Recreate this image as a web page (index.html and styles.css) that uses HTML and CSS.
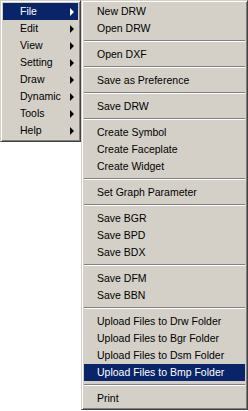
FILE: index.html
```
<!DOCTYPE html>
<html lang="en">
<head>
    <meta charset="UTF-8">
    <title>Menu</title>
    <link rel="stylesheet" href="styles.css">
</head>
<body>
    <div class="menus">
        <ul class="menu main-menu">
            <li class="item active has-sub">File</li>
            <li class="item has-sub">Edit</li>
            <li class="item has-sub">View</li>
            <li class="item has-sub">Setting</li>
            <li class="item has-sub">Draw</li>
            <li class="item has-sub">Dynamic</li>
            <li class="item has-sub">Tools</li>
            <li class="item has-sub">Help</li>
        </ul>
        <ul class="menu sub-menu">
            <li class="item">New DRW</li>
            <li class="item">Open DRW</li>
            <li class="sep"></li>
            <li class="item">Open DXF</li>
            <li class="sep"></li>
            <li class="item">Save as Preference</li>
            <li class="sep"></li>
            <li class="item">Save DRW</li>
            <li class="sep"></li>
            <li class="item">Create Symbol</li>
            <li class="item">Create Faceplate</li>
            <li class="item">Create Widget</li>
            <li class="sep"></li>
            <li class="item">Set Graph Parameter</li>
            <li class="sep"></li>
            <li class="item">Save BGR</li>
            <li class="item">Save BPD</li>
            <li class="item">Save BDX</li>
            <li class="sep"></li>
            <li class="item">Save DFM</li>
            <li class="item">Save BBN</li>
            <li class="sep"></li>
            <li class="item">Upload Files to Drw Folder</li>
            <li class="item">Upload Files to Bgr Folder</li>
            <li class="item">Upload Files to Dsm Folder</li>
            <li class="item active">Upload Files to Bmp Folder</li>
            <li class="sep"></li>
            <li class="item">Print</li>
        </ul>
    </div>
</body>
</html>
```

FILE: styles.css
```
body {
    margin: 0;
    background: #ffffff;
    font-family: "Liberation Sans", Arial, sans-serif;
    font-size: 10.5px;
    color: #000000;
}

.menus {
    display: flex;
    align-items: flex-start;
}

.menu {
    list-style: none;
    margin: 0;
    padding: 2px;
    background: #d4d0c8;
    border: 1px solid;
    border-color: #d4d0c8 #404040 #404040 #d4d0c8;
    box-shadow: inset 1px 1px #ffffff, inset -1px -1px #808080;
}

.main-menu {
    width: 75px;
}

.sub-menu {
    width: 161px;
}

.item {
    position: relative;
    height: 17px;
    line-height: 17px;
    white-space: nowrap;
}

.main-menu .item {
    padding-left: 17px;
}

.sub-menu .item {
    padding-left: 13px;
}

.item.active {
    background: #0a246a;
    color: #ffffff;
}

/* little black arrow for items that open a submenu */
.has-sub::after {
    content: "";
    position: absolute;
    right: 4px;
    top: 5px;
    border-style: solid;
    border-width: 4px 0 4px 4px;
    border-color: transparent transparent transparent #000000;
}

.has-sub.active::after {
    border-left-color: #ffffff;
}

.sep {
    height: 9px;
    position: relative;
}

.sep::before {
    content: "";
    position: absolute;
    left: 0;
    right: 0;
    top: 3px;
    height: 1px;
    background: #808080;
    border-bottom: 1px solid #ffffff;
}
```
